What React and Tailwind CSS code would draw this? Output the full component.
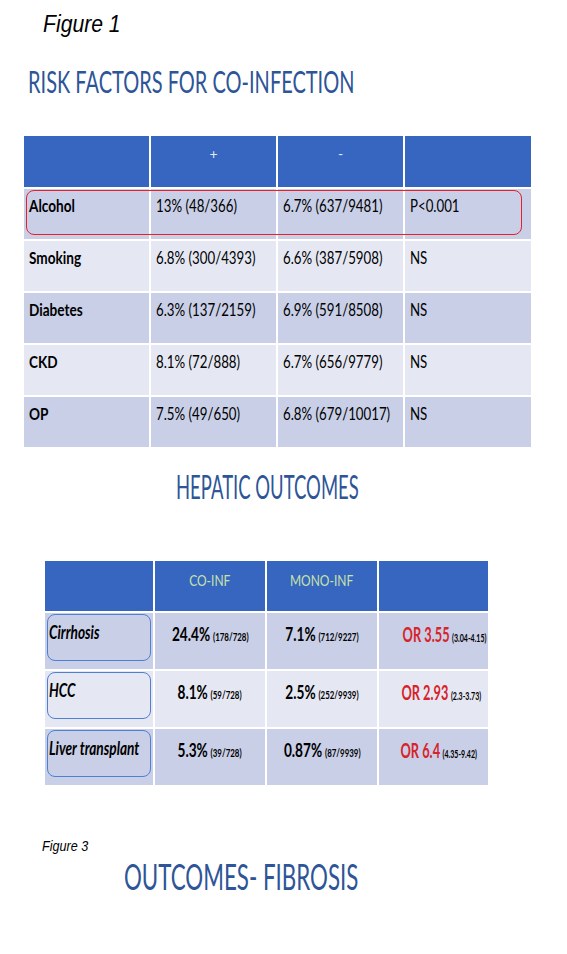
const RISK_ROWS = [
  { name: 'Alcohol', pos: '13% (48/366)', neg: '6.7% (637/9481)', p: 'P<0.001', dark: true },
  { name: 'Smoking', pos: '6.8% (300/4393)', neg: '6.6% (387/5908)', p: 'NS', dark: false },
  { name: 'Diabetes', pos: '6.3% (137/2159)', neg: '6.9% (591/8508)', p: 'NS', dark: true },
  { name: 'CKD', pos: '8.1% (72/888)', neg: '6.7% (656/9779)', p: 'NS', dark: false },
  { name: 'OP', pos: '7.5% (49/650)', neg: '6.8% (679/10017)', p: 'NS', dark: true },
];

const HEPATIC_ROWS = [
  { name: 'Cirrhosis', co: '24.4%', coN: '(178/728)', mono: '7.1%', monoN: '(712/9227)', or: 'OR 3.55', ci: '(3.04-4.15)', dark: true },
  { name: 'HCC', co: '8.1%', coN: '(59/728)', mono: '2.5%', monoN: '(252/9939)', or: 'OR 2.93', ci: '(2.3-3.73)', dark: false },
  { name: 'Liver transplant', co: '5.3%', coN: '(39/728)', mono: '0.87%', monoN: '(87/9939)', or: 'OR 6.4', ci: '(4.35-9.42)', dark: true },
];

const calibri = "font-['Lato','Open_Sans',sans-serif]";

function RiskTable() {
  return (
    <div className="relative ml-[24px] w-[507px] grid grid-cols-[125px_125px_125px_126px] gap-[2px] bg-white">
      <div className="h-[51px] bg-[#3666bf]" />
      <div className="h-[51px] bg-[#3666bf] text-center pt-[7px] text-[14px] text-[#e4e9f7]">+</div>
      <div className="h-[51px] bg-[#3666bf] text-center pt-[7px] text-[14px] text-[#e4e9f7]">-</div>
      <div className="h-[51px] bg-[#3666bf]" />
      {RISK_ROWS.map(r => {
        const bg = r.dark ? 'bg-[#c8cfe7]' : 'bg-[#e5e8f3]';
        return [
          <div key={r.name + 'a'} className={`h-[50px] ${bg} pl-[5px] pt-[4px] text-[17px] font-bold text-black whitespace-nowrap`}>
            <span className="inline-block origin-left scale-x-[0.8]">{r.name}</span>
          </div>,
          <div key={r.name + 'b'} className={`h-[50px] ${bg} pl-[5px] pt-[4px] text-[17px] text-black whitespace-nowrap`}>
            <span className="inline-block origin-left scale-x-[0.78]">{r.pos}</span>
          </div>,
          <div key={r.name + 'c'} className={`h-[50px] ${bg} pl-[5px] pt-[4px] text-[17px] text-black whitespace-nowrap`}>
            <span className="inline-block origin-left scale-x-[0.78]">{r.neg}</span>
          </div>,
          <div key={r.name + 'd'} className={`h-[50px] ${bg} pl-[5px] pt-[4px] text-[17px] text-black whitespace-nowrap`}>
            <span className="inline-block origin-left scale-x-[0.78]">{r.p}</span>
          </div>,
        ];
      })}
      {/* highlight on the alcohol row */}
      <div className="absolute left-[2px] top-[54px] w-[496px] h-[45px] rounded-[8px] border-[1.5px] border-[#e8202a]" />
    </div>
  );
}

function HepaticTable() {
  return (
    <div className="ml-[45px] w-[443px] grid grid-cols-[108px_110px_110px_109px] gap-[2px] bg-white">
      <div className="h-[50px] bg-[#3666bf]" />
      <div className="h-[50px] bg-[#3666bf] text-center pt-[8px] text-[15px] text-[#c8e3a9]">
        <span className="inline-block origin-center scale-x-[0.8]">CO-INF</span>
      </div>
      <div className="h-[50px] bg-[#3666bf] text-center pt-[8px] text-[15px] text-[#c8e3a9]">
        <span className="inline-block origin-center scale-x-[0.8]">MONO-INF</span>
      </div>
      <div className="h-[50px] bg-[#3666bf]" />
      {HEPATIC_ROWS.map(r => {
        const bg = r.dark ? 'bg-[#c8cfe7]' : 'bg-[#e5e8f3]';
        return [
          <div key={r.name + 'a'} className={`h-[56px] ${bg} px-[2px] pt-[1px]`}>
            <div className="h-[47px] rounded-[8px] border-[1.5px] border-[#4f7fd3] pl-[1px] pt-[3px] text-[19px] font-bold italic text-black whitespace-nowrap">
              <span className="inline-block origin-left scale-x-[0.72]">{r.name}</span>
            </div>
          </div>,
          <div key={r.name + 'b'} className={`h-[56px] ${bg} text-center pt-[7px] text-black font-bold whitespace-nowrap`}>
            <span className="inline-block origin-center scale-x-[0.72]">
              <span className="text-[19px]">{r.co}</span> <span className="text-[11px]">{r.coN}</span>
            </span>
          </div>,
          <div key={r.name + 'c'} className={`h-[56px] ${bg} text-center pt-[7px] text-black font-bold whitespace-nowrap`}>
            <span className="inline-block origin-center scale-x-[0.72]">
              <span className="text-[19px]">{r.mono}</span> <span className="text-[11px]">{r.monoN}</span>
            </span>
          </div>,
          <div key={r.name + 'd'} className={`h-[56px] ${bg} text-center pt-[6px] font-bold whitespace-nowrap`}>
            <span className="inline-block origin-center scale-x-[0.64]">
              <span className="text-[20px] text-[#d8232a]">{r.or}</span> <span className="text-[11px] text-black">{r.ci}</span>
            </span>
          </div>,
        ];
      })}
    </div>
  );
}

export default function App() {
  return (
    <div className={`w-[567px] h-[954px] bg-white overflow-hidden ${calibri}`}>
      <div className="pt-[13px] pl-[43px] text-[23px] leading-none italic text-black font-['Liberation_Sans',Arial,sans-serif]">
        <span className="inline-block origin-left scale-x-[0.92]">Figure 1</span>
      </div>
      <div className="mt-[30px] pl-[28px] text-[31px] leading-none text-[#2d5597] whitespace-nowrap">
        <span className="inline-block origin-left scale-x-[0.645]">RISK FACTORS FOR CO-INFECTION</span>
      </div>
      <div className="mt-[39px]">
        <RiskTable />
      </div>
      <div className="mt-[23px] pl-[176px] text-[33px] leading-none text-[#2d5597] whitespace-nowrap">
        <span className="inline-block origin-left scale-x-[0.56]">HEPATIC OUTCOMES</span>
      </div>
      <div className="mt-[58px]">
        <HepaticTable />
      </div>
      <div className="mt-[53px] pl-[42px] text-[15px] leading-none italic text-black font-['Liberation_Sans',Arial,sans-serif]">
        <span className="inline-block origin-left scale-x-[0.84]">Figure 3</span>
      </div>
      <div className="mt-[5px] pl-[124px] text-[36px] leading-none text-[#2d5597] whitespace-nowrap">
        <span className="inline-block origin-left scale-x-[0.62]">OUTCOMES- FIBROSIS</span>
      </div>
    </div>
  );
}
